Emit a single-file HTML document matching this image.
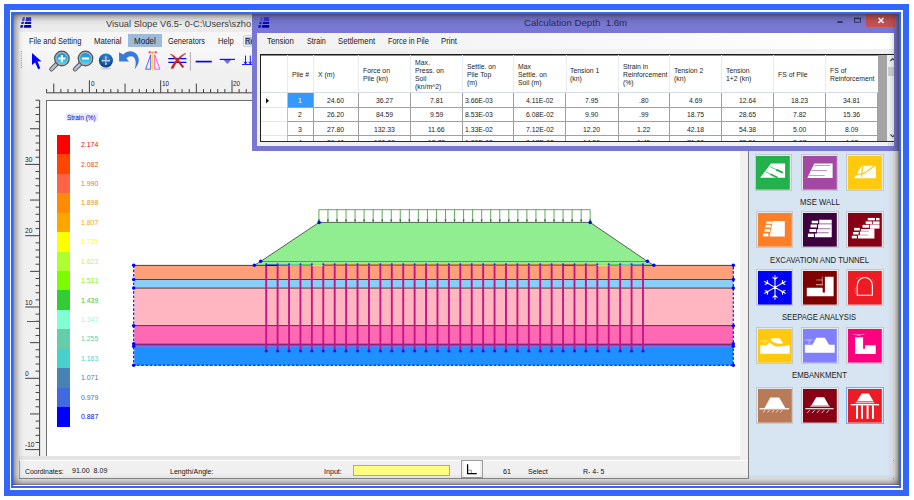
<!DOCTYPE html><html><head><meta charset="utf-8"><title>Visual Slope V6.5</title><style>
*{box-sizing:border-box;margin:0;padding:0}
html,body{width:914px;height:500px;background:#fff;overflow:hidden}
body{font-family:"Liberation Sans",sans-serif;color:#222}
#root{position:absolute;left:0;top:0;width:914px;height:500px;overflow:hidden;background:#fff}
.a{position:absolute}
.t{position:absolute;white-space:nowrap;line-height:1}
svg{overflow:visible}
svg text{font-family:"Liberation Sans",sans-serif}
</style></head><body><div id="root">
<div class="a" style="left:4px;top:4px;width:905px;height:492px;background:#3366ff"></div>
<div class="a" style="left:10px;top:10px;width:893px;height:480px;background:#fff"></div>
<div class="a" style="left:11px;top:12px;width:890px;height:476px;background:#3366ff"></div>
<div class="a" style="left:13px;top:14px;width:886px;height:472px;background:#fffdf4"></div>
<div id="scr" class="a" style="left:13px;top:14px;width:886px;height:471px;background:#ebebeb;overflow:hidden">
<div class="a" style="left:0.00px;top:0.00px;width:886.00px;height:18.00px;background:#ebebeb"></div>
<div class="t" style="left:92.60px;top:5px;font-size:9.8px;color:#3c3c3c;transform-origin:0 50%;transform:scaleX(0.9464);">Visual Slope V6.5- 0-C:\Users\szho</div>
<svg class="a" style="left:7.00px;top:3.30px" width="11.2" height="10.8" viewBox="0 0 11.2 10.8" >
<polygon points="2.7,0.2 5.1,0.2 4.2,4.3 1.8,4.3" fill="#5454e6"/><polygon points="6.2,0.2 11.2,0.2 11.2,4.3 5.3,4.3" fill="#3434d6"/><polygon points="1.55,5.1 4,5.1 3.55,7.1 1.1,7.1" fill="#2424d0"/><polygon points="5.1,5.1 11.2,5.1 11.2,7.1 4.65,7.1" fill="#0a0ac4"/><polygon points="0.75,8 3.3,8 2.7,10.7 0.1,10.7" fill="#1414c8"/><polygon points="4.4,8 11.2,8 11.2,10.7 3.8,10.7" fill="#0000b2"/>
</svg>
<div class="a" style="left:6.00px;top:18.00px;width:876.00px;height:16.00px;background:#f6f6f6"></div>
<div class="a" style="left:114.80px;top:20.40px;width:34.00px;height:12.50px;background:#9ebad9"></div>
<div class="t" style="left:15.80px;top:24px;font-size:8.2px;color:#1a1a1a;transform-origin:0 50%;transform:scaleX(0.9214);">File and Setting</div>
<div class="t" style="left:80.70px;top:24px;font-size:8.2px;color:#1a1a1a;transform-origin:0 50%;transform:scaleX(0.9463);">Material</div>
<div class="t" style="left:120.70px;top:24px;font-size:8.2px;color:#1a1a1a;transform-origin:0 50%;transform:scaleX(0.9806);">Model</div>
<div class="t" style="left:155.00px;top:24px;font-size:8.2px;color:#1a1a1a;transform-origin:0 50%;transform:scaleX(0.9020);">Generators</div>
<div class="t" style="left:204.50px;top:24px;font-size:8.2px;color:#1a1a1a;transform-origin:0 50%;transform:scaleX(0.9309);">Help</div>
<div class="a" style="left:229.50px;top:20.60px;width:20.00px;height:12.40px;background:#f1f1f1;border:1px solid #d0d0d0;border-radius:2px"></div>
<div class="a" style="left:231.80px;top:22.80px;width:12.00px;height:8.40px;background:#9ebad9"></div>
<div class="t" style="left:232.00px;top:24px;font-size:8.2px;color:#14143c;transform-origin:0 50%;transform:scaleX(0.9200);">Re</div>
<div class="a" style="left:6.00px;top:34.00px;width:876.00px;height:430.00px;background:#f0f0f0"></div>
<div class="a" style="left:6.00px;top:34.00px;width:876.00px;height:24.00px;background:linear-gradient(#f8f8f8,#f0f0f0)"></div>
<div class="a" style="left:33.00px;top:86.00px;width:694.50px;height:355.50px;background:#fff;border-left:1px solid #707070;border-top:1px solid #707070"></div>
<div class="a" style="left:6.00px;top:441.50px;width:729.50px;height:4.50px;background:#e4e4e4"></div>
<div class="a" style="left:6.00px;top:446.00px;width:729.50px;height:18.70px;background:#f0f0f0;border-top:1px solid #fff;border-left:1px solid #a8a8a8;border-bottom:1px solid #8c8c8c"></div>
<div class="t" style="left:12.00px;top:454px;font-size:8.0px;color:#111;transform-origin:0 50%;transform:scaleX(0.8532);">Coordinates:</div>
<div class="t" style="left:59.40px;top:453px;font-size:8.0px;color:#111;transform-origin:0 50%;transform:scaleX(0.8817);">91.00&nbsp; 8.09</div>
<div class="t" style="left:156.50px;top:454px;font-size:8.0px;color:#111;transform-origin:0 50%;transform:scaleX(0.8810);">Length/Angle:</div>
<div class="t" style="left:310.60px;top:454px;font-size:8.0px;color:#111;transform-origin:0 50%;transform:scaleX(0.8893);">Input:</div>
<div class="t" style="left:489.60px;top:454px;font-size:8.0px;color:#111;transform-origin:0 50%;transform:scaleX(0.8990);">61</div>
<div class="t" style="left:514.50px;top:454px;font-size:8.0px;color:#111;transform-origin:0 50%;transform:scaleX(0.8860);">Select</div>
<div class="t" style="left:569.60px;top:454px;font-size:8.0px;color:#111;transform-origin:0 50%;transform:scaleX(0.8753);">R- 4- 5</div>
<div class="a" style="left:340.40px;top:450.70px;width:96.30px;height:11.60px;background:#ffff80;border:1px solid #a8a8a0"></div>
<div class="a" style="left:447.60px;top:446.40px;width:22.30px;height:18.10px;background:#f0f0f0;border:1px solid #9c9c9c"></div>
<div class="a" style="left:450.80px;top:447.40px;width:16.30px;height:16.10px;background:#fff"></div>
<svg class="a" style="left:0.00px;top:0.00px" width="886" height="471" viewBox="0 0 886 471" >
<path d="M454.60,450.20 V459.50 H463.80" stroke="#000" stroke-width="1.25" fill="none"/>
<path d="M455.20,456.10 H458.30 V459.00" stroke="#555" stroke-width="0.6" fill="none"/>
</svg>
<svg class="a" style="left:0.00px;top:0.00px" width="886" height="471" viewBox="0 0 886 471" shape-rendering="auto">
<path d="M33.30,78.80 H239 M33.62,78.80 v-3.8 M40.75,78.80 v-9.2 M47.88,78.80 v-3.8 M55.01,78.80 v-3.8 M62.14,78.80 v-3.8 M69.27,78.80 v-3.8 M76.40,78.80 v-12.5 M83.53,78.80 v-3.8 M90.66,78.80 v-3.8 M97.79,78.80 v-3.8 M104.92,78.80 v-3.8 M112.05,78.80 v-9.2 M119.18,78.80 v-3.8 M126.31,78.80 v-3.8 M133.44,78.80 v-3.8 M140.57,78.80 v-3.8 M147.70,78.80 v-12.5 M154.83,78.80 v-3.8 M161.96,78.80 v-3.8 M169.09,78.80 v-3.8 M176.22,78.80 v-3.8 M183.35,78.80 v-9.2 M190.48,78.80 v-3.8 M197.61,78.80 v-3.8 M204.74,78.80 v-3.8 M211.87,78.80 v-3.8 M219.00,78.80 v-12.5 M226.13,78.80 v-3.8 M233.26,78.80 v-3.8" stroke="#404040" stroke-width="1" fill="none"/>
<path d="M26.60,86.30 V442 M26.60,86.23 h-4 M26.60,93.36 h-4 M26.60,100.49 h-4 M26.60,107.62 h-4 M26.60,114.75 h-9.6 M26.60,121.88 h-4 M26.60,129.01 h-4 M26.60,136.14 h-4 M26.60,143.27 h-4 M26.60,150.40 h-14.4 M26.60,157.53 h-4 M26.60,164.66 h-4 M26.60,171.79 h-4 M26.60,178.92 h-4 M26.60,186.05 h-9.6 M26.60,193.18 h-4 M26.60,200.31 h-4 M26.60,207.44 h-4 M26.60,214.57 h-4 M26.60,221.70 h-14.4 M26.60,228.83 h-4 M26.60,235.96 h-4 M26.60,243.09 h-4 M26.60,250.22 h-4 M26.60,257.35 h-9.6 M26.60,264.48 h-4 M26.60,271.61 h-4 M26.60,278.74 h-4 M26.60,285.87 h-4 M26.60,293.00 h-14.4 M26.60,300.13 h-4 M26.60,307.26 h-4 M26.60,314.39 h-4 M26.60,321.52 h-4 M26.60,328.65 h-9.6 M26.60,335.78 h-4 M26.60,342.91 h-4 M26.60,350.04 h-4 M26.60,357.17 h-4 M26.60,364.30 h-14.4 M26.60,371.43 h-4 M26.60,378.56 h-4 M26.60,385.69 h-4 M26.60,392.82 h-4 M26.60,399.95 h-9.6 M26.60,407.08 h-4 M26.60,414.21 h-4 M26.60,421.34 h-4 M26.60,428.47 h-4 M26.60,435.60 h-14.4" stroke="#404040" stroke-width="1" fill="none"/>
</svg>
<div class="t" style="left:77.60px;top:66px;font-size:7.3px;color:#222;transform-origin:0 50%;transform:scaleX(0.8800);">0</div>
<div class="t" style="left:148.90px;top:66px;font-size:7.3px;color:#222;transform-origin:0 50%;transform:scaleX(0.8800);">10</div>
<div class="t" style="left:220.20px;top:66px;font-size:7.3px;color:#222;transform-origin:0 50%;transform:scaleX(0.8800);">20</div>
<div class="t" style="left:12.20px;top:142px;font-size:7.3px;color:#222;transform-origin:0 50%;transform:scaleX(0.9000);">30</div>
<div class="t" style="left:12.20px;top:213px;font-size:7.3px;color:#222;transform-origin:0 50%;transform:scaleX(0.9000);">20</div>
<div class="t" style="left:12.20px;top:285px;font-size:7.3px;color:#222;transform-origin:0 50%;transform:scaleX(0.9000);">10</div>
<div class="t" style="left:12.20px;top:356px;font-size:7.3px;color:#222;transform-origin:0 50%;transform:scaleX(0.9000);">0</div>
<div class="t" style="left:12.20px;top:427px;font-size:7.3px;color:#222;transform-origin:0 50%;transform:scaleX(0.9000);">-10</div>
<div class="a" style="left:13.50px;top:307.00px;width:13.00px;height:1.00px;background:#e02020"></div>
<div class="a" style="left:52.50px;top:99.00px;width:32.30px;height:8.20px;background:#ebebf5"></div>
<div class="t" style="left:54.20px;top:100px;font-size:7.4px;color:#0000e0;transform-origin:0 50%;transform:scaleX(0.8755);">Strain (%)</div>
<div class="a" style="left:44.00px;top:121.00px;width:13.20px;height:19.73px;background:#ff0000"></div>
<div class="t" style="left:68.00px;top:127px;font-size:7.4px;color:#ff0000;transform-origin:0 50%;transform:scaleX(0.9342);">2.174</div>
<div class="a" style="left:44.00px;top:140.43px;width:13.20px;height:19.73px;background:#ff4500"></div>
<div class="t" style="left:68.00px;top:147px;font-size:7.4px;color:#ff4500;transform-origin:0 50%;transform:scaleX(0.9342);">2.082</div>
<div class="a" style="left:44.00px;top:159.86px;width:13.20px;height:19.73px;background:#ff6347"></div>
<div class="t" style="left:68.00px;top:166px;font-size:7.4px;color:#ff6347;transform-origin:0 50%;transform:scaleX(0.9342);">1.990</div>
<div class="a" style="left:44.00px;top:179.29px;width:13.20px;height:19.73px;background:#ff8c00"></div>
<div class="t" style="left:68.00px;top:185px;font-size:7.4px;color:#ff8c00;transform-origin:0 50%;transform:scaleX(0.9342);">1.898</div>
<div class="a" style="left:44.00px;top:198.72px;width:13.20px;height:19.73px;background:#ffa500"></div>
<div class="t" style="left:68.00px;top:205px;font-size:7.4px;color:#ffa500;transform-origin:0 50%;transform:scaleX(0.9342);">1.807</div>
<div class="a" style="left:44.00px;top:218.15px;width:13.20px;height:19.73px;background:#ffff00"></div>
<div class="t" style="left:68.00px;top:224px;font-size:7.4px;color:#ffff00;transform-origin:0 50%;transform:scaleX(0.9342);">1.715</div>
<div class="a" style="left:44.00px;top:237.58px;width:13.20px;height:19.73px;background:#adff2f"></div>
<div class="t" style="left:68.00px;top:244px;font-size:7.4px;color:#adff2f;transform-origin:0 50%;transform:scaleX(0.9342);">1.623</div>
<div class="a" style="left:44.00px;top:257.01px;width:13.20px;height:19.73px;background:#7cfc00"></div>
<div class="t" style="left:68.00px;top:263px;font-size:7.4px;color:#7cfc00;transform-origin:0 50%;transform:scaleX(0.9342);">1.531</div>
<div class="a" style="left:44.00px;top:276.44px;width:13.20px;height:19.73px;background:#32cd32"></div>
<div class="t" style="left:68.00px;top:283px;font-size:7.4px;color:#32cd32;transform-origin:0 50%;transform:scaleX(0.9342);">1.439</div>
<div class="a" style="left:44.00px;top:295.87px;width:13.20px;height:19.73px;background:#7fffd4"></div>
<div class="t" style="left:68.00px;top:302px;font-size:7.4px;color:#7fffd4;transform-origin:0 50%;transform:scaleX(0.9342);">1.347</div>
<div class="a" style="left:44.00px;top:315.30px;width:13.20px;height:19.73px;background:#66cdaa"></div>
<div class="t" style="left:68.00px;top:321px;font-size:7.4px;color:#66cdaa;transform-origin:0 50%;transform:scaleX(0.9342);">1.255</div>
<div class="a" style="left:44.00px;top:334.73px;width:13.20px;height:19.73px;background:#48d1cc"></div>
<div class="t" style="left:68.00px;top:341px;font-size:7.4px;color:#48d1cc;transform-origin:0 50%;transform:scaleX(0.9342);">1.163</div>
<div class="a" style="left:44.00px;top:354.16px;width:13.20px;height:19.73px;background:#4682b4"></div>
<div class="t" style="left:68.00px;top:360px;font-size:7.4px;color:#4682b4;transform-origin:0 50%;transform:scaleX(0.9342);">1.071</div>
<div class="a" style="left:44.00px;top:373.59px;width:13.20px;height:19.73px;background:#4169e1"></div>
<div class="t" style="left:68.00px;top:380px;font-size:7.4px;color:#4169e1;transform-origin:0 50%;transform:scaleX(0.9342);">0.979</div>
<div class="a" style="left:44.00px;top:393.02px;width:13.20px;height:19.73px;background:#0000ff"></div>
<div class="t" style="left:68.00px;top:399px;font-size:7.4px;color:#0000ff;transform-origin:0 50%;transform:scaleX(0.9342);">0.887</div>
<svg class="a" style="left:0.00px;top:0.00px" width="886" height="471" viewBox="0 0 886 471" >
<rect x="121.30" y="251.40" width="598.70" height="14.40" fill="#ffa07a"/>
<rect x="121.30" y="265.50" width="598.70" height="8.90" fill="#87cefa"/>
<rect x="121.30" y="274.10" width="598.70" height="37.80" fill="#ffb6c1"/>
<rect x="121.30" y="311.60" width="598.70" height="18.90" fill="#ff69b4"/>
<rect x="121.30" y="330.20" width="598.70" height="2.50" fill="#ff00ff"/>
<rect x="121.30" y="332.40" width="598.70" height="19.10" fill="#1e90ff"/>
<path d="M121.30,251.40 H720.00" stroke="#3a3030" stroke-width="0.9"/>
<path d="M121.30,265.50 H720.00" stroke="#3a3030" stroke-width="0.9"/>
<path d="M121.30,274.10 H720.00" stroke="#3a3030" stroke-width="0.9"/>
<path d="M121.30,311.60 H720.00" stroke="#3a3030" stroke-width="0.9"/>
<path d="M121.30,330.20 H720.00" stroke="#3a3030" stroke-width="0.9"/>
<polygon points="241.30,251.30 247.70,247.40 306.10,208.40 577.20,208.40 634.40,247.40 640.90,251.30" fill="#90ee90" stroke="#3a3a3a" stroke-width="0.8"/>
<path d="M247.70,247.50 H634.40" stroke="#e8640c" stroke-width="1"/>
<path d="M305.90,208.40 V195.70 H577.20 V208.40 M314.94,195.70 V208.00 M323.99,195.70 V208.00 M333.03,195.70 V208.00 M342.07,195.70 V208.00 M351.12,195.70 V208.00 M360.16,195.70 V208.00 M369.20,195.70 V208.00 M378.25,195.70 V208.00 M387.29,195.70 V208.00 M396.33,195.70 V208.00 M405.38,195.70 V208.00 M414.42,195.70 V208.00 M423.46,195.70 V208.00 M432.51,195.70 V208.00 M441.55,195.70 V208.00 M450.59,195.70 V208.00 M459.64,195.70 V208.00 M468.68,195.70 V208.00 M477.72,195.70 V208.00 M486.77,195.70 V208.00 M495.81,195.70 V208.00 M504.85,195.70 V208.00 M513.90,195.70 V208.00 M522.94,195.70 V208.00 M531.98,195.70 V208.00 M541.03,195.70 V208.00 M550.07,195.70 V208.00 M559.11,195.70 V208.00 M568.16,195.70 V208.00" stroke="#2e8b2e" stroke-width="0.75" fill="none"/>
<path d="M304.80,205.60 L305.90,208.20 L307.00,205.60Z M313.84,205.60 L314.94,208.20 L316.04,205.60Z M322.89,205.60 L323.99,208.20 L325.09,205.60Z M331.93,205.60 L333.03,208.20 L334.13,205.60Z M340.97,205.60 L342.07,208.20 L343.17,205.60Z M350.02,205.60 L351.12,208.20 L352.22,205.60Z M359.06,205.60 L360.16,208.20 L361.26,205.60Z M368.10,205.60 L369.20,208.20 L370.30,205.60Z M377.15,205.60 L378.25,208.20 L379.35,205.60Z M386.19,205.60 L387.29,208.20 L388.39,205.60Z M395.23,205.60 L396.33,208.20 L397.43,205.60Z M404.28,205.60 L405.38,208.20 L406.48,205.60Z M413.32,205.60 L414.42,208.20 L415.52,205.60Z M422.36,205.60 L423.46,208.20 L424.56,205.60Z M431.41,205.60 L432.51,208.20 L433.61,205.60Z M440.45,205.60 L441.55,208.20 L442.65,205.60Z M449.49,205.60 L450.59,208.20 L451.69,205.60Z M458.54,205.60 L459.64,208.20 L460.74,205.60Z M467.58,205.60 L468.68,208.20 L469.78,205.60Z M476.62,205.60 L477.72,208.20 L478.82,205.60Z M485.67,205.60 L486.77,208.20 L487.87,205.60Z M494.71,205.60 L495.81,208.20 L496.91,205.60Z M503.75,205.60 L504.85,208.20 L505.95,205.60Z M512.80,205.60 L513.90,208.20 L515.00,205.60Z M521.84,205.60 L522.94,208.20 L524.04,205.60Z M530.88,205.60 L531.98,208.20 L533.08,205.60Z M539.93,205.60 L541.03,208.20 L542.13,205.60Z M548.97,205.60 L550.07,208.20 L551.17,205.60Z M558.01,205.60 L559.11,208.20 L560.21,205.60Z M567.06,205.60 L568.16,208.20 L569.26,205.60Z M576.10,205.60 L577.20,208.20 L578.30,205.60Z" fill="#1e7a1e"/>
<path d="M253.20,251.40 V337.00 M264.62,251.40 V337.00 M276.04,251.40 V337.00 M287.45,251.40 V337.00 M298.87,251.40 V337.00 M310.29,251.40 V337.00 M321.71,251.40 V337.00 M333.13,251.40 V337.00 M344.54,251.40 V337.00 M355.96,251.40 V337.00 M367.38,251.40 V337.00 M378.80,251.40 V337.00 M390.22,251.40 V337.00 M401.63,251.40 V337.00 M413.05,251.40 V337.00 M424.47,251.40 V337.00 M435.89,251.40 V337.00 M447.31,251.40 V337.00 M458.72,251.40 V337.00 M470.14,251.40 V337.00 M481.56,251.40 V337.00 M492.98,251.40 V337.00 M504.40,251.40 V337.00 M515.81,251.40 V337.00 M527.23,251.40 V337.00 M538.65,251.40 V337.00 M550.07,251.40 V337.00 M561.49,251.40 V337.00 M572.90,251.40 V337.00 M584.32,251.40 V337.00 M595.74,251.40 V337.00 M607.16,251.40 V337.00 M618.58,251.40 V337.00 M629.99,251.40 V337.00" stroke="#c71585" stroke-width="1.9" fill="none"/>
<path d="M253.20,251.30 H264.62" stroke="#0000ff" stroke-width="1.5"/>
<path d="M264.62,251.30 H276.04" stroke="#4169e1" stroke-width="1.5"/>
<path d="M276.04,251.30 H287.45" stroke="#48d1cc" stroke-width="1.5"/>
<path d="M287.45,251.30 H298.87" stroke="#32cd32" stroke-width="1.5"/>
<path d="M298.87,251.30 H310.29" stroke="#adff2f" stroke-width="1.5"/>
<path d="M310.29,251.30 H550.07" stroke="#ff4500" stroke-width="1.5"/>
<path d="M550.07,251.30 H561.49" stroke="#ff0000" stroke-width="1.5"/>
<path d="M561.49,251.30 H584.32" stroke="#ff4500" stroke-width="1.5"/>
<path d="M584.32,251.30 H595.74" stroke="#adff2f" stroke-width="1.5"/>
<path d="M595.74,251.30 H607.16" stroke="#32cd32" stroke-width="1.5"/>
<path d="M607.16,251.30 H618.58" stroke="#48d1cc" stroke-width="1.5"/>
<path d="M618.58,251.30 H629.99" stroke="#4169e1" stroke-width="1.5"/>
<circle cx="253.20" cy="337.00" r="1.6" fill="#1a1aff"/>
<circle cx="253.20" cy="250.30" r="1.1" fill="#2a2ae8"/>
<circle cx="264.62" cy="337.00" r="1.6" fill="#1a1aff"/>
<circle cx="264.62" cy="250.30" r="1.1" fill="#2a2ae8"/>
<circle cx="276.04" cy="337.00" r="1.6" fill="#1a1aff"/>
<circle cx="276.04" cy="250.30" r="1.1" fill="#2a2ae8"/>
<circle cx="287.45" cy="337.00" r="1.6" fill="#1a1aff"/>
<circle cx="287.45" cy="250.30" r="1.1" fill="#2a2ae8"/>
<circle cx="298.87" cy="337.00" r="1.6" fill="#1a1aff"/>
<circle cx="298.87" cy="250.30" r="1.1" fill="#2a2ae8"/>
<circle cx="310.29" cy="337.00" r="1.6" fill="#1a1aff"/>
<circle cx="310.29" cy="250.30" r="1.1" fill="#2a2ae8"/>
<circle cx="321.71" cy="337.00" r="1.6" fill="#1a1aff"/>
<circle cx="321.71" cy="250.30" r="1.1" fill="#2a2ae8"/>
<circle cx="333.13" cy="337.00" r="1.6" fill="#1a1aff"/>
<circle cx="333.13" cy="250.30" r="1.1" fill="#2a2ae8"/>
<circle cx="344.54" cy="337.00" r="1.6" fill="#1a1aff"/>
<circle cx="344.54" cy="250.30" r="1.1" fill="#2a2ae8"/>
<circle cx="355.96" cy="337.00" r="1.6" fill="#1a1aff"/>
<circle cx="355.96" cy="250.30" r="1.1" fill="#2a2ae8"/>
<circle cx="367.38" cy="337.00" r="1.6" fill="#1a1aff"/>
<circle cx="367.38" cy="250.30" r="1.1" fill="#2a2ae8"/>
<circle cx="378.80" cy="337.00" r="1.6" fill="#1a1aff"/>
<circle cx="378.80" cy="250.30" r="1.1" fill="#2a2ae8"/>
<circle cx="390.22" cy="337.00" r="1.6" fill="#1a1aff"/>
<circle cx="390.22" cy="250.30" r="1.1" fill="#2a2ae8"/>
<circle cx="401.63" cy="337.00" r="1.6" fill="#1a1aff"/>
<circle cx="401.63" cy="250.30" r="1.1" fill="#2a2ae8"/>
<circle cx="413.05" cy="337.00" r="1.6" fill="#1a1aff"/>
<circle cx="413.05" cy="250.30" r="1.1" fill="#2a2ae8"/>
<circle cx="424.47" cy="337.00" r="1.6" fill="#1a1aff"/>
<circle cx="424.47" cy="250.30" r="1.1" fill="#2a2ae8"/>
<circle cx="435.89" cy="337.00" r="1.6" fill="#1a1aff"/>
<circle cx="435.89" cy="250.30" r="1.1" fill="#2a2ae8"/>
<circle cx="447.31" cy="337.00" r="1.6" fill="#1a1aff"/>
<circle cx="447.31" cy="250.30" r="1.1" fill="#2a2ae8"/>
<circle cx="458.72" cy="337.00" r="1.6" fill="#1a1aff"/>
<circle cx="458.72" cy="250.30" r="1.1" fill="#2a2ae8"/>
<circle cx="470.14" cy="337.00" r="1.6" fill="#1a1aff"/>
<circle cx="470.14" cy="250.30" r="1.1" fill="#2a2ae8"/>
<circle cx="481.56" cy="337.00" r="1.6" fill="#1a1aff"/>
<circle cx="481.56" cy="250.30" r="1.1" fill="#2a2ae8"/>
<circle cx="492.98" cy="337.00" r="1.6" fill="#1a1aff"/>
<circle cx="492.98" cy="250.30" r="1.1" fill="#2a2ae8"/>
<circle cx="504.40" cy="337.00" r="1.6" fill="#1a1aff"/>
<circle cx="504.40" cy="250.30" r="1.1" fill="#2a2ae8"/>
<circle cx="515.81" cy="337.00" r="1.6" fill="#1a1aff"/>
<circle cx="515.81" cy="250.30" r="1.1" fill="#2a2ae8"/>
<circle cx="527.23" cy="337.00" r="1.6" fill="#1a1aff"/>
<circle cx="527.23" cy="250.30" r="1.1" fill="#2a2ae8"/>
<circle cx="538.65" cy="337.00" r="1.6" fill="#1a1aff"/>
<circle cx="538.65" cy="250.30" r="1.1" fill="#2a2ae8"/>
<circle cx="550.07" cy="337.00" r="1.6" fill="#1a1aff"/>
<circle cx="550.07" cy="250.30" r="1.1" fill="#2a2ae8"/>
<circle cx="561.49" cy="337.00" r="1.6" fill="#1a1aff"/>
<circle cx="561.49" cy="250.30" r="1.1" fill="#2a2ae8"/>
<circle cx="572.90" cy="337.00" r="1.6" fill="#1a1aff"/>
<circle cx="572.90" cy="250.30" r="1.1" fill="#2a2ae8"/>
<circle cx="584.32" cy="337.00" r="1.6" fill="#1a1aff"/>
<circle cx="584.32" cy="250.30" r="1.1" fill="#2a2ae8"/>
<circle cx="595.74" cy="337.00" r="1.6" fill="#1a1aff"/>
<circle cx="595.74" cy="250.30" r="1.1" fill="#2a2ae8"/>
<circle cx="607.16" cy="337.00" r="1.6" fill="#1a1aff"/>
<circle cx="607.16" cy="250.30" r="1.1" fill="#2a2ae8"/>
<circle cx="618.58" cy="337.00" r="1.6" fill="#1a1aff"/>
<circle cx="618.58" cy="250.30" r="1.1" fill="#2a2ae8"/>
<circle cx="629.99" cy="337.00" r="1.6" fill="#1a1aff"/>
<circle cx="629.99" cy="250.30" r="1.1" fill="#2a2ae8"/>
<path d="M120.70,251.30 V351.30 H720.30 V251.30" stroke="#0000ff" stroke-width="1.1" stroke-dasharray="2.6,1.7" fill="none"/>
<circle cx="120.70" cy="251.30" r="1.75" fill="#0000ff"/>
<circle cx="120.70" cy="265.50" r="1.75" fill="#0000ff"/>
<circle cx="120.70" cy="274.10" r="1.75" fill="#0000ff"/>
<circle cx="120.70" cy="311.70" r="1.75" fill="#0000ff"/>
<circle cx="120.70" cy="329.70" r="1.75" fill="#0000ff"/>
<circle cx="120.70" cy="332.30" r="1.75" fill="#0000ff"/>
<circle cx="120.70" cy="351.30" r="1.75" fill="#0000ff"/>
<circle cx="720.30" cy="251.30" r="1.75" fill="#0000ff"/>
<circle cx="720.30" cy="265.50" r="1.75" fill="#0000ff"/>
<circle cx="720.30" cy="274.10" r="1.75" fill="#0000ff"/>
<circle cx="720.30" cy="311.70" r="1.75" fill="#0000ff"/>
<circle cx="720.30" cy="329.70" r="1.75" fill="#0000ff"/>
<circle cx="720.30" cy="332.30" r="1.75" fill="#0000ff"/>
<circle cx="720.30" cy="351.30" r="1.75" fill="#0000ff"/>
<circle cx="241.30" cy="251.20" r="1.75" fill="#0000ff"/>
<circle cx="247.70" cy="247.30" r="1.75" fill="#0000ff"/>
<circle cx="306.10" cy="208.40" r="1.75" fill="#0000ff"/>
<circle cx="577.20" cy="208.40" r="1.75" fill="#0000ff"/>
<circle cx="634.40" cy="247.30" r="1.75" fill="#0000ff"/>
<circle cx="640.90" cy="251.20" r="1.75" fill="#0000ff"/>
</svg>
<div class="a" style="left:727.40px;top:86.00px;width:8.30px;height:360.00px;background:#f0f0f0"></div>
<div class="a" style="left:735.00px;top:86.00px;width:142.50px;height:378.20px;background:#d7e4f2"></div>
<div class="a" style="left:735.00px;top:86.00px;width:1.00px;height:377.80px;background:#7c7c7c"></div>
<div class="a" style="left:877.50px;top:86.00px;width:3.60px;height:378.00px;background:#e9e9e9"></div>
<div class="a" style="left:879.60px;top:445.60px;width:1.80px;height:1.00px;background:#a6a6a6"></div>
<div class="a" style="left:879.60px;top:464.00px;width:1.80px;height:1.00px;background:#a6a6a6"></div>
<div class="a" style="left:741.50px;top:139.85px;width:37.30px;height:37.00px;background:#e6e8ea;border:1px solid #c6c9cc"></div>
<svg class="a" style="left:743.20px;top:141.60px" width="33.8" height="33.6" viewBox="0 0 34 34" preserveAspectRatio="none">
<rect width="34" height="34" fill="#22b14c"/><polygon points="4.05,22.05 15.1,7.65 29.25,7.65 29.25,22.05" fill="#fff"/><path d="M14,10.8 L20.7,13.95 M9.45,15.9 L14.85,18.6" stroke="#22b14c" stroke-width="0.7"/><path d="M20.9,14.05 L26.3,16.55 M15.1,18.7 L20.9,21.5" stroke="#22b14c" stroke-width="1.9" stroke-linecap="round"/>
</svg>
<div class="a" style="left:787.80px;top:139.85px;width:37.30px;height:37.00px;background:#e6e8ea;border:1px solid #c6c9cc"></div>
<svg class="a" style="left:789.50px;top:141.60px" width="33.8" height="33.6" viewBox="0 0 34 34" preserveAspectRatio="none">
<rect width="34" height="34" fill="#a349a4"/><polygon points="4.33,22.26 11.4,7.6 29.8,7.6 29.8,22.26" fill="#fff"/><path d="M11.2,9.6 H27.1 M8.5,14.7 H24.1 M5.85,19.8 H21.8" stroke="#a349a4" stroke-opacity=".7" stroke-width="0.85"/>
</svg>
<div class="a" style="left:833.30px;top:139.85px;width:37.30px;height:37.00px;background:#e6e8ea;border:1px solid #c6c9cc"></div>
<svg class="a" style="left:835.00px;top:141.60px" width="33.8" height="33.6" viewBox="0 0 34 34" preserveAspectRatio="none">
<rect width="34" height="34" fill="#ffc90e"/><polygon points="6.1,22.6 13.7,9.9 28.1,9.9 28.1,22.6" fill="#fff"/><path d="M27.8,9.2 L16.2,17.7 L7.6,18.8 M14.5,10.4 L13.7,21" stroke="#ffc90e" stroke-width="1.3" fill="none"/>
</svg>
<div class="a" style="left:742.90px;top:197.30px;width:37.30px;height:37.00px;background:#e6e8ea;border:1px solid #c6c9cc"></div>
<svg class="a" style="left:744.60px;top:199.05px" width="33.8" height="33.6" viewBox="0 0 34 34" preserveAspectRatio="none">
<rect width="34" height="34" fill="#ff7f27"/><polygon points="14.9,8.1 27,8.1 27,23.85 11.6,23.85" fill="#fff"/><rect x="8.3" y="8.65" width="5.90" height="2.25" fill="#fff"/><rect x="7.4" y="12" width="5.70" height="2.70" fill="#fff"/><rect x="6.5" y="16.3" width="5.70" height="2.70" fill="#fff"/><rect x="5.15" y="20.8" width="5.35" height="2.90" fill="#fff"/><path d="M14.6,11.4 H8 M13.5,15.5 H7 M12.5,19.9 H6" stroke="#ff7f27" stroke-width="0.01"/>
</svg>
<div class="a" style="left:788.30px;top:197.30px;width:37.30px;height:37.00px;background:#e6e8ea;border:1px solid #c6c9cc"></div>
<svg class="a" style="left:790.00px;top:199.05px" width="33.8" height="33.6" viewBox="0 0 34 34" preserveAspectRatio="none">
<rect width="34" height="34" fill="#3f0040"/><polygon points="16.3,6.85 28.9,6.85 28.9,24.5 12,24.5 12,20.7 14,20.7 14,16.5 15.2,16.5 15.2,11.4 16.3,11.4" fill="#fff"/><rect x="8.74" y="7.85" width="6.46" height="2.55" fill="#fff"/><rect x="7.6" y="11.65" width="6.40" height="3.00" fill="#fff"/><rect x="6.46" y="16.2" width="6.74" height="3.00" fill="#fff"/><rect x="4.94" y="20.9" width="5.96" height="3.40" fill="#fff"/><path d="M15.2,11.0 H28.9 M14,15.95 H27.7 M13.3,20 H25.8" stroke="#3f0040" stroke-opacity=".75" stroke-width="0.75"/>
</svg>
<div class="a" style="left:833.40px;top:197.30px;width:37.30px;height:37.00px;background:#e6e8ea;border:1px solid #c6c9cc"></div>
<svg class="a" style="left:835.10px;top:199.05px" width="33.8" height="33.6" viewBox="0 0 34 34" preserveAspectRatio="none">
<rect width="34" height="34" fill="#880015"/><rect x="19.9" y="5" width="7.20" height="2.45" fill="#fff"/><rect x="28.2" y="5" width="3.50" height="2.45" fill="#fff"/><rect x="17.8" y="8.5" width="6.30" height="2.75" fill="#fff"/><rect x="24.9" y="8.5" width="6.80" height="2.75" fill="#fff"/><rect x="14.6" y="12" width="6.80" height="2.90" fill="#fff"/><rect x="22.2" y="11.6" width="9.50" height="4.20" fill="#fff"/><rect x="6.2" y="15.05" width="5.70" height="2.65" fill="#fff"/><rect x="5.1" y="19.2" width="5.70" height="2.50" fill="#fff"/><rect x="3.8" y="23" width="5.10" height="2.70" fill="#fff"/><polygon points="13,16.2 22.2,16.2 22.2,15.8 26.6,15.8 26.6,25.7 10,25.7 10,22.6 12,22.6 12,18.8 13,18.8" fill="#fff"/><path d="M13,18.45 H21 M12,22.3 H20" stroke="#880015" stroke-opacity=".55" stroke-width="0.7"/>
</svg>
<div class="a" style="left:742.90px;top:255.10px;width:37.30px;height:37.00px;background:#e6e8ea;border:1px solid #c6c9cc"></div>
<svg class="a" style="left:744.60px;top:256.85px" width="33.8" height="33.6" viewBox="0 0 34 34" preserveAspectRatio="none">
<rect width="34" height="34" fill="#0000ff"/><path d="M17.10,16.60 L17.10,4.20 M17.10,8.42 L19.63,6.14 M17.10,8.42 L14.57,6.14 M17.10,16.60 L6.36,10.40 M10.01,12.51 L9.31,9.18 M10.01,12.51 L6.78,13.56 M17.10,16.60 L6.36,22.80 M10.01,20.69 L6.78,19.64 M10.01,20.69 L9.31,24.02 M17.10,16.60 L17.10,29.00 M17.10,24.78 L14.57,27.06 M17.10,24.78 L19.63,27.06 M17.10,16.60 L27.84,22.80 M24.19,20.69 L24.89,24.02 M24.19,20.69 L27.42,19.64 M17.10,16.60 L27.84,10.40 M24.19,12.51 L27.42,13.56 M24.19,12.51 L24.89,9.18" stroke="#fff" stroke-width="1.05" fill="none"/>
</svg>
<div class="a" style="left:788.30px;top:255.10px;width:37.30px;height:37.00px;background:#e6e8ea;border:1px solid #c6c9cc"></div>
<svg class="a" style="left:790.00px;top:256.85px" width="33.8" height="33.6" viewBox="0 0 34 34" preserveAspectRatio="none">
<rect width="34" height="34" fill="#800000"/><polygon points="3.8,16.9 19.76,16.9 19.76,21.66 22.04,21.66 22.04,5.7 30.8,5.7 30.8,25.46 3.8,25.46" fill="#fff"/><path d="M13.3,9.1 H19.7 M19.4,5.7 V14.8" stroke="#fff" stroke-opacity=".85" stroke-width="0.6"/><path d="M12.9,13.85 H19.7" stroke="#e9bcbc" stroke-opacity=".8" stroke-width="1.2"/>
</svg>
<div class="a" style="left:833.40px;top:255.10px;width:37.30px;height:37.00px;background:#e6e8ea;border:1px solid #c6c9cc"></div>
<svg class="a" style="left:835.10px;top:256.85px" width="33.8" height="33.6" viewBox="0 0 34 34" preserveAspectRatio="none">
<rect width="34" height="34" fill="#ed1c24"/><path d="M9.3,24.5 V14.6 C9.3,4 24.5,4 24.5,14.6 V24.5 Z" stroke="#fff" stroke-width="1.1" fill="none" stroke-linejoin="round"/><path d="M8.2,7 L10,8 M10.5,5.2 L11.8,6.6 M24.4,8.4 L25.6,9.4 M25.6,10.6 L26.8,11.4 M6.4,17.2 L8,18 M6.6,20 L8,20.6 M7,22.4 L8.2,22.6" stroke="#fbb" stroke-opacity=".7" stroke-width="0.6"/>
</svg>
<div class="a" style="left:742.90px;top:313.20px;width:37.30px;height:37.00px;background:#e6e8ea;border:1px solid #c6c9cc"></div>
<svg class="a" style="left:744.60px;top:314.95px" width="33.8" height="33.6" viewBox="0 0 34 34" preserveAspectRatio="none">
<rect width="34" height="34" fill="#ffc90e"/><path d="M2.25,16.47 H8.6 L11.4,13.5 L15.3,16.47 C17.5,18 21,17.9 26.5,17.3 L31.8,16.47 V24.93 H2.25Z" fill="#fff"/><path d="M12.6,10.8 L13.8,9.45 H22.05 L25.3,14.5 C21,15.6 16,14.6 12.6,10.8Z" fill="#fff"/><path d="M2.25,12.2 H10.6 M5.6,13.4 H8 M6.4,14.6 H7.4" stroke="#fff" stroke-opacity=".6" stroke-width="0.7"/>
</svg>
<div class="a" style="left:788.30px;top:313.20px;width:37.30px;height:37.00px;background:#e6e8ea;border:1px solid #c6c9cc"></div>
<svg class="a" style="left:790.00px;top:314.95px" width="33.8" height="33.6" viewBox="0 0 34 34" preserveAspectRatio="none">
<rect width="34" height="34" fill="#8080ff"/><path d="M1.9,15.96 H9.5 L13.3,8.97 H22 L26.2,15.96 H31.9 V24.16 H1.9Z" fill="#fff"/><path d="M1.9,11 H10.6 M4.9,12.2 H8 M5.2,14.4 H7.6" stroke="#fff" stroke-opacity=".65" stroke-width="0.7"/>
</svg>
<div class="a" style="left:833.40px;top:313.20px;width:37.30px;height:37.00px;background:#e6e8ea;border:1px solid #c6c9cc"></div>
<svg class="a" style="left:835.10px;top:314.95px" width="33.8" height="33.6" viewBox="0 0 34 34" preserveAspectRatio="none">
<rect width="34" height="34" fill="#ff007f"/><polygon points="7.07,8.36 15.2,8.36 15.2,20.1 17.1,20.1 17.1,16.34 27.9,16.34 27.9,25.3 7.07,25.3" fill="#fff"/><path d="M5.3,5.55 H16.7 M9.1,6.6 H12.5" stroke="#fff" stroke-opacity=".7" stroke-width="0.6"/>
</svg>
<div class="a" style="left:742.90px;top:373.40px;width:37.30px;height:37.00px;background:#e6e8ea;border:1px solid #c6c9cc"></div>
<svg class="a" style="left:744.60px;top:375.15px" width="33.8" height="33.6" viewBox="0 0 34 34" preserveAspectRatio="none">
<rect width="34" height="34" fill="#b97a57"/><polygon points="6.5,19.6 12.35,8.48 21.35,8.48 27.65,19.6" fill="#fff"/><path d="M1.55,20 H31.25" stroke="#fff" stroke-width="1.3"/><path d="M6.95,21.4 L5.15,23.8 M11.45,21.4 L9.65,23.8 M15.95,21.4 L14.15,23.8 M20,21.4 L18.2,23.8 M24.3,21.4 L22.5,23.8" stroke="#fff" stroke-opacity=".9" stroke-width="0.8"/>
</svg>
<div class="a" style="left:788.30px;top:373.40px;width:37.30px;height:37.00px;background:#e6e8ea;border:1px solid #c6c9cc"></div>
<svg class="a" style="left:790.00px;top:375.15px" width="33.8" height="33.6" viewBox="0 0 34 34" preserveAspectRatio="none">
<rect width="34" height="34" fill="#880015"/><polygon points="8.2,16.87 13.3,8.36 21.3,8.36 26.2,16.87" fill="#fff"/><path d="M7.2,17.5 H27" stroke="#d9a9b1" stroke-width="1.2"/><path d="M2.3,19.95 H30.8" stroke="#fff" stroke-width="1.1"/><path d="M6.8,21.4 L4.2,24.3 M11.8,21.4 L9.2,24.3 M16.6,21.4 L14,24.3 M21.4,21.4 L18.8,24.3 M26.2,21.4 L23.6,24.3" stroke="#fff" stroke-opacity=".9" stroke-width="0.85"/>
</svg>
<div class="a" style="left:833.40px;top:373.40px;width:37.30px;height:37.00px;background:#dcecfb;border:1px solid #6fb0f2"></div>
<svg class="a" style="left:835.10px;top:375.15px" width="33.8" height="33.6" viewBox="0 0 34 34" preserveAspectRatio="none">
<rect width="34" height="34" fill="#ed1c24"/><polygon points="8.9,12.5 13.8,4.56 21,4.56 25.6,12.5" fill="#fff"/><path d="M7.75,13.75 H26.4" stroke="#f5b5b8" stroke-width="1.6"/><path d="M2.8,15.9 H31.3" stroke="#fff" stroke-width="1.4"/><path d="M9.1,16.6 V30 M14.1,16.6 V30 M19.7,16.6 V30 M25.1,16.6 V30" stroke="#fff" stroke-width="2"/>
</svg>
<div class="t" style="left:786.75px;top:185px;font-size:8.2px;color:#1c1c1c;transform-origin:0 50%;transform:scaleX(0.9483);">MSE WALL</div>
<div class="t" style="left:756.80px;top:243px;font-size:8.2px;color:#1c1c1c;transform-origin:0 50%;transform:scaleX(0.9438);">EXCAVATION AND TUNNEL</div>
<div class="t" style="left:769.30px;top:300px;font-size:8.2px;color:#1c1c1c;transform-origin:0 50%;transform:scaleX(0.9285);">SEEPAGE ANALYSIS</div>
<div class="t" style="left:779.15px;top:358px;font-size:8.2px;color:#1c1c1c;transform-origin:0 50%;transform:scaleX(0.9523);">EMBANKMENT</div>
<svg class="a" style="left:0.00px;top:0.00px" width="886" height="471" viewBox="0 0 886 471" >
<defs>
<linearGradient id="gl" x1="0" y1="0" x2="0" y2="1"><stop offset="0" stop-color="#1888d8"/><stop offset="0.55" stop-color="#22b4ea"/><stop offset="1" stop-color="#5ee8f4"/></linearGradient>
<radialGradient id="gs" cx="0.5" cy="0.3" r="0.75"><stop offset="0" stop-color="#3f8fd6"/><stop offset="0.55" stop-color="#165fae"/><stop offset="1" stop-color="#062f66"/></radialGradient>
<linearGradient id="gx" x1="0" y1="0" x2="1" y2="1"><stop offset="0" stop-color="#e83a30"/><stop offset="1" stop-color="#a80808"/></linearGradient>
</defs>
<path d="M8.30,37.00 V54.20" stroke="#9a9a9a" stroke-width="1.2" stroke-dasharray="1,1.3"/>
<polygon points="19.00,39.00 19.00,51.00 22.20,48.40 25.10,55.20 27.30,54.20 24.60,47.60 28.40,47.30" fill="#0000ff"/>
<path d="M43.50,50.10 L38.40,55.30" stroke="#50565c" stroke-width="4.4" stroke-linecap="round"/>
<path d="M43.50,50.10 L38.40,55.30" stroke="#b9c1c9" stroke-width="2.5" stroke-linecap="round"/>
<circle cx="48.90" cy="44.50" r="7.1" fill="url(#gl)" stroke="#50565c" stroke-width="1.6"/>
<circle cx="48.90" cy="44.50" r="6.0" fill="none" stroke="#a4aeb8" stroke-width="1.3"/>
<path d="M45.40,44.50 H52.40 M48.90,41.00 V48.00" stroke="#fff" stroke-width="2.1"/>
<path d="M67.10,50.10 L62.00,55.30" stroke="#50565c" stroke-width="4.4" stroke-linecap="round"/>
<path d="M67.10,50.10 L62.00,55.30" stroke="#b9c1c9" stroke-width="2.5" stroke-linecap="round"/>
<circle cx="72.50" cy="44.50" r="7.1" fill="url(#gl)" stroke="#50565c" stroke-width="1.6"/>
<circle cx="72.50" cy="44.50" r="6.0" fill="none" stroke="#a4aeb8" stroke-width="1.3"/>
<path d="M69.00,44.50 H76.00" stroke="#fff" stroke-width="2.1"/>
<ellipse cx="93.00" cy="54.40" rx="5.2" ry="1.1" fill="#c4ccd6"/>
<circle cx="92.90" cy="46.50" r="7.05" fill="url(#gs)"/>
<path d="M89.40,46.60 H96.40 M92.90,43.00 V50.20" stroke="#c4d2e8" stroke-width="1.1"/>
<path d="M88.40,46.60 l1.5,-1.3 v2.6z M97.40,46.60 l-1.5,-1.3 v2.6z M92.90,42.00 l-1.3,1.5 h2.6z M92.90,51.20 l-1.3,-1.5 h2.6z" fill="#c4d2e8"/>
<path d="M106.00,38.20 L106.15,47.40 L116.00,47.40 L113.50,44.50 C116.00,41.40 120.20,41.40 121.80,44.70 C123.40,48.00 122.80,52.00 121.40,55.50 C124.60,52.00 126.40,48.40 125.70,44.60 C124.40,37.40 116.00,34.40 110.30,40.60 Z" fill="#3b79d8"/>
<path d="M139.70,37.40 V56.70" stroke="#f2e020" stroke-width="1.2"/>
<polygon points="132.60,55.20 137.70,55.20 137.70,40.80" fill="none" stroke="#3a3aff" stroke-width="0.8"/>
<polygon points="141.70,40.80 141.70,55.20 146.90,55.20" fill="none" stroke="#ff30e0" stroke-width="0.8"/>
<path d="M135.80,38.30 H143.80 M135.60,38.30 l1.6,-1 v2z M144.00,38.30 l-1.6,-1 v2z" stroke="#f23a3a" stroke-width="0.5" fill="#f23a3a"/>
<path d="M155.30,44.60 H173.40 M155.30,48.40 H173.40" stroke="#0000ff" stroke-width="1.3"/>
<path d="M157.40,40.00 C162.00,41.20 167.00,47.50 170.90,53.00 L169.40,53.60 C165.50,48.50 161.00,43.60 157.40,40.00Z" fill="url(#gx)" stroke="#c8261c" stroke-width="0.5"/>
<path d="M172.60,39.40 C166.00,42.00 161.00,48.00 158.00,54.30 L160.30,54.20 C162.60,48.60 167.00,43.40 172.60,39.40Z" fill="url(#gx)" stroke="#c8261c" stroke-width="0.7"/>
<path d="M177.40,38.00 V56.60" stroke="#a6a6a6" stroke-width="0.9"/>
<path d="M182.60,47.60 H198.80" stroke="#0000ff" stroke-width="1.7"/>
<path d="M206.70,45.40 H222.00" stroke="#1010ff" stroke-width="1.2"/>
<polygon points="210.60,46.00 218.10,46.00 214.35,50.00" fill="#6a6aee"/>
<path d="M232.50,41.60 V50.00 M237.30,41.60 V50.00 M229.00,50.50 H241.00 M231.00,47.80 L232.50,50.00 L234.00,47.80 M235.80,47.80 L237.30,50.00 L238.80,47.80" stroke="#1a1aff" stroke-width="1" fill="none"/>
</svg>
<div class="a" style="left:238.90px;top:0.00px;width:648.00px;height:136.70px;background:#7878d2"></div>
<svg class="a" style="left:244.90px;top:3.30px" width="11.2" height="10.8" viewBox="0 0 11.2 10.8" >
<polygon points="2.7,0.2 5.1,0.2 4.2,4.3 1.8,4.3" fill="#5454e6"/><polygon points="6.2,0.2 11.2,0.2 11.2,4.3 5.3,4.3" fill="#3434d6"/><polygon points="1.55,5.1 4,5.1 3.55,7.1 1.1,7.1" fill="#2424d0"/><polygon points="5.1,5.1 11.2,5.1 11.2,7.1 4.65,7.1" fill="#0a0ac4"/><polygon points="0.75,8 3.3,8 2.7,10.7 0.1,10.7" fill="#1414c8"/><polygon points="4.4,8 11.2,8 11.2,10.7 3.8,10.7" fill="#0000b2"/>
</svg>
<div class="t" style="left:511.40px;top:4px;font-size:9.8px;color:#2a2a50;transform-origin:0 50%;transform:scaleX(0.9867);">Calculation Depth&nbsp; 1.6m</div>
<div class="a" style="left:853.00px;top:0.00px;width:29.00px;height:12.60px;background:#c75050"></div>
<svg class="a" style="left:0.00px;top:0.00px" width="886" height="471" viewBox="0 0 886 471" >
<path d="M865.5,3.8999999999999986 l5,5 M870.5,3.8999999999999986 l-5,5" stroke="#fff" stroke-width="1.5"/>
<rect x="841.6" y="4.600000000000001" width="5.8" height="3.6" fill="none" stroke="#26264a" stroke-width="0.8"/><path d="M841.2,4.399999999999999 h6.6" stroke="#26264a" stroke-width="1.3"/>
<path d="M824.3,8 h5.4" stroke="#26264a" stroke-width="1.5"/>
</svg>
<div class="a" style="left:244.00px;top:18.80px;width:637.40px;height:113.30px;background:#f0f0f0"></div>
<div class="a" style="left:244.00px;top:18.80px;width:637.40px;height:16.50px;background:linear-gradient(to right,#f1f1f1,#f6f6f6 40%,#ffffff)"></div>
<div class="t" style="left:254.00px;top:24px;font-size:8.2px;color:#1a1a1a;transform-origin:0 50%;transform:scaleX(0.9482);">Tension</div>
<div class="t" style="left:293.50px;top:24px;font-size:8.2px;color:#1a1a1a;transform-origin:0 50%;transform:scaleX(0.8776);">Strain</div>
<div class="t" style="left:324.80px;top:24px;font-size:8.2px;color:#1a1a1a;transform-origin:0 50%;transform:scaleX(0.9490);">Settlement</div>
<div class="t" style="left:374.70px;top:24px;font-size:8.2px;color:#1a1a1a;transform-origin:0 50%;transform:scaleX(0.8975);">Force in Pile</div>
<div class="t" style="left:428.30px;top:24px;font-size:8.2px;color:#1a1a1a;transform-origin:0 50%;transform:scaleX(0.9490);">Print</div>
<div class="a" style="left:247.00px;top:40.00px;width:634.40px;height:88.00px;background:#a4a4a4;overflow:hidden;border-top:1px solid #1c1c1c;border-left:1px solid #1c1c1c;border-bottom:1px solid #2a2a2a">
<div class="a" style="left:0.00px;top:0.30px;width:616.90px;height:37.50px;background:#fff"></div>
<div class="a" style="left:0.00px;top:0.00px;width:640.00px;height:0.60px;background:#8a8a8a"></div>
<div class="a" style="left:0.00px;top:37.80px;width:26.60px;height:60.00px;background:#fff"></div>
<div class="a" style="left:26.60px;top:37.80px;width:590.30px;height:60.00px;background:#fff"></div>
<div class="a" style="left:26.90px;top:38.20px;width:25.00px;height:13.90px;background:#3399ff"></div>
<div class="a" style="left:26.20px;top:0.30px;width:0.90px;height:37.50px;background:#e6ecf4"></div>
<div class="a" style="left:51.70px;top:0.30px;width:0.90px;height:37.50px;background:#e6ecf4"></div>
<div class="a" style="left:97.30px;top:0.30px;width:0.90px;height:37.50px;background:#e6ecf4"></div>
<div class="a" style="left:149.00px;top:0.30px;width:0.90px;height:37.50px;background:#e6ecf4"></div>
<div class="a" style="left:201.00px;top:0.30px;width:0.90px;height:37.50px;background:#e6ecf4"></div>
<div class="a" style="left:252.40px;top:0.30px;width:0.90px;height:37.50px;background:#e6ecf4"></div>
<div class="a" style="left:304.50px;top:0.30px;width:0.90px;height:37.50px;background:#e6ecf4"></div>
<div class="a" style="left:356.60px;top:0.30px;width:0.90px;height:37.50px;background:#e6ecf4"></div>
<div class="a" style="left:408.10px;top:0.30px;width:0.90px;height:37.50px;background:#e6ecf4"></div>
<div class="a" style="left:459.90px;top:0.30px;width:0.90px;height:37.50px;background:#e6ecf4"></div>
<div class="a" style="left:512.00px;top:0.30px;width:0.90px;height:37.50px;background:#e6ecf4"></div>
<div class="a" style="left:563.70px;top:0.30px;width:0.90px;height:37.50px;background:#e6ecf4"></div>
<div class="a" style="left:0.00px;top:37.30px;width:616.90px;height:1.00px;background:#d4dce8"></div>
<div class="a" style="left:0.00px;top:51.90px;width:26.60px;height:0.90px;background:#dfe7f1"></div>
<div class="a" style="left:0.00px;top:66.20px;width:26.60px;height:0.90px;background:#dfe7f1"></div>
<div class="a" style="left:0.00px;top:80.20px;width:26.60px;height:0.90px;background:#dfe7f1"></div>
<div class="a" style="left:26.10px;top:37.80px;width:0.90px;height:60.00px;background:#b8c0cc"></div>
<div class="a" style="left:51.60px;top:37.80px;width:1.00px;height:60.00px;background:#a0a0a0"></div>
<div class="a" style="left:97.20px;top:37.80px;width:1.00px;height:60.00px;background:#a0a0a0"></div>
<div class="a" style="left:148.90px;top:37.80px;width:1.00px;height:60.00px;background:#a0a0a0"></div>
<div class="a" style="left:200.90px;top:37.80px;width:1.00px;height:60.00px;background:#a0a0a0"></div>
<div class="a" style="left:252.30px;top:37.80px;width:1.00px;height:60.00px;background:#a0a0a0"></div>
<div class="a" style="left:304.40px;top:37.80px;width:1.00px;height:60.00px;background:#a0a0a0"></div>
<div class="a" style="left:356.50px;top:37.80px;width:1.00px;height:60.00px;background:#a0a0a0"></div>
<div class="a" style="left:408.00px;top:37.80px;width:1.00px;height:60.00px;background:#a0a0a0"></div>
<div class="a" style="left:459.80px;top:37.80px;width:1.00px;height:60.00px;background:#a0a0a0"></div>
<div class="a" style="left:511.90px;top:37.80px;width:1.00px;height:60.00px;background:#a0a0a0"></div>
<div class="a" style="left:563.60px;top:37.80px;width:1.00px;height:60.00px;background:#a0a0a0"></div>
<div class="a" style="left:616.40px;top:37.80px;width:1.00px;height:60.00px;background:#a0a0a0"></div>
<div class="a" style="left:26.60px;top:51.80px;width:590.30px;height:1.00px;background:#a0a0a0"></div>
<div class="a" style="left:26.60px;top:66.10px;width:590.30px;height:1.00px;background:#a0a0a0"></div>
<div class="a" style="left:26.60px;top:80.10px;width:590.30px;height:1.00px;background:#a0a0a0"></div>
<div class="t" style="left:31.10px;top:16px;font-size:7.6px;color:#1c1c1c;transform-origin:0 50%;transform:scaleX(0.9);">Pile #</div>
<div class="t" style="left:56.60px;top:16px;font-size:7.6px;color:#1c1c1c;transform-origin:0 50%;transform:scaleX(0.9);">X (m)</div>
<div class="t" style="left:102.20px;top:12px;font-size:7.6px;color:#1c1c1c;transform-origin:0 50%;transform:scaleX(0.9);">Force on</div>
<div class="t" style="left:102.20px;top:20px;font-size:7.6px;color:#1c1c1c;transform-origin:0 50%;transform:scaleX(0.9);">Pile (kn)</div>
<div class="t" style="left:153.90px;top:4px;font-size:7.6px;color:#1c1c1c;transform-origin:0 50%;transform:scaleX(0.9);">Max.</div>
<div class="t" style="left:153.90px;top:12px;font-size:7.6px;color:#1c1c1c;transform-origin:0 50%;transform:scaleX(0.9);">Press. on</div>
<div class="t" style="left:153.90px;top:20px;font-size:7.6px;color:#1c1c1c;transform-origin:0 50%;transform:scaleX(0.9);">Soil</div>
<div class="t" style="left:153.90px;top:28px;font-size:7.6px;color:#1c1c1c;transform-origin:0 50%;transform:scaleX(0.9);">(kn/m^2)</div>
<div class="t" style="left:205.90px;top:8px;font-size:7.6px;color:#1c1c1c;transform-origin:0 50%;transform:scaleX(0.9);">Settle. on</div>
<div class="t" style="left:205.90px;top:16px;font-size:7.6px;color:#1c1c1c;transform-origin:0 50%;transform:scaleX(0.9);">Pile Top</div>
<div class="t" style="left:205.90px;top:24px;font-size:7.6px;color:#1c1c1c;transform-origin:0 50%;transform:scaleX(0.9);">(m)</div>
<div class="t" style="left:257.30px;top:8px;font-size:7.6px;color:#1c1c1c;transform-origin:0 50%;transform:scaleX(0.9);">Max</div>
<div class="t" style="left:257.30px;top:16px;font-size:7.6px;color:#1c1c1c;transform-origin:0 50%;transform:scaleX(0.9);">Settle. on</div>
<div class="t" style="left:257.30px;top:24px;font-size:7.6px;color:#1c1c1c;transform-origin:0 50%;transform:scaleX(0.9);">Soil (m)</div>
<div class="t" style="left:309.40px;top:12px;font-size:7.6px;color:#1c1c1c;transform-origin:0 50%;transform:scaleX(0.9);">Tension 1</div>
<div class="t" style="left:309.40px;top:20px;font-size:7.6px;color:#1c1c1c;transform-origin:0 50%;transform:scaleX(0.9);">(kn)</div>
<div class="t" style="left:361.50px;top:8px;font-size:7.6px;color:#1c1c1c;transform-origin:0 50%;transform:scaleX(0.9);">Strain in</div>
<div class="t" style="left:361.50px;top:16px;font-size:7.6px;color:#1c1c1c;transform-origin:0 50%;transform:scaleX(0.9);">Reinforcement</div>
<div class="t" style="left:361.50px;top:24px;font-size:7.6px;color:#1c1c1c;transform-origin:0 50%;transform:scaleX(0.9);">(%)</div>
<div class="t" style="left:413.00px;top:12px;font-size:7.6px;color:#1c1c1c;transform-origin:0 50%;transform:scaleX(0.9);">Tension 2</div>
<div class="t" style="left:413.00px;top:20px;font-size:7.6px;color:#1c1c1c;transform-origin:0 50%;transform:scaleX(0.9);">(kn)</div>
<div class="t" style="left:464.80px;top:12px;font-size:7.6px;color:#1c1c1c;transform-origin:0 50%;transform:scaleX(0.9);">Tension</div>
<div class="t" style="left:464.80px;top:20px;font-size:7.6px;color:#1c1c1c;transform-origin:0 50%;transform:scaleX(0.9);">1+2 (kn)</div>
<div class="t" style="left:516.90px;top:16px;font-size:7.6px;color:#1c1c1c;transform-origin:0 50%;transform:scaleX(0.9);">FS of Pile</div>
<div class="t" style="left:568.60px;top:12px;font-size:7.6px;color:#1c1c1c;transform-origin:0 50%;transform:scaleX(0.9);">FS of</div>
<div class="t" style="left:568.60px;top:20px;font-size:7.6px;color:#1c1c1c;transform-origin:0 50%;transform:scaleX(0.9);">Reinforcement</div>
<div class="t" style="left:37.45px;top:42px;font-size:7.6px;color:#fff;transform-origin:0 50%;transform:scaleX(0.9);">1</div>
<div class="t" style="left:66.34px;top:42px;font-size:7.6px;color:#1a1a1a;transform-origin:0 50%;transform:scaleX(0.9);">24.60</div>
<div class="t" style="left:114.99px;top:42px;font-size:7.6px;color:#1a1a1a;transform-origin:0 50%;transform:scaleX(0.9);">36.27</div>
<div class="t" style="left:168.74px;top:42px;font-size:7.6px;color:#1a1a1a;transform-origin:0 50%;transform:scaleX(0.9);">7.81</div>
<div class="t" style="left:203.60px;top:42px;font-size:7.6px;color:#1a1a1a;transform-origin:0 50%;transform:scaleX(0.9);">3.66E-03</div>
<div class="t" style="left:265.22px;top:42px;font-size:7.6px;color:#1a1a1a;transform-origin:0 50%;transform:scaleX(0.9);">4.11E-02</div>
<div class="t" style="left:324.29px;top:42px;font-size:7.6px;color:#1a1a1a;transform-origin:0 50%;transform:scaleX(0.9);">7.95</div>
<div class="t" style="left:378.00px;top:42px;font-size:7.6px;color:#1a1a1a;transform-origin:0 50%;transform:scaleX(0.9);">.80</div>
<div class="t" style="left:427.74px;top:42px;font-size:7.6px;color:#1a1a1a;transform-origin:0 50%;transform:scaleX(0.9);">4.69</div>
<div class="t" style="left:477.79px;top:42px;font-size:7.6px;color:#1a1a1a;transform-origin:0 50%;transform:scaleX(0.9);">12.64</div>
<div class="t" style="left:529.69px;top:42px;font-size:7.6px;color:#1a1a1a;transform-origin:0 50%;transform:scaleX(0.9);">18.23</div>
<div class="t" style="left:581.94px;top:42px;font-size:7.6px;color:#1a1a1a;transform-origin:0 50%;transform:scaleX(0.9);">34.81</div>
<div class="t" style="left:37.45px;top:56px;font-size:7.6px;color:#1a1a1a;transform-origin:0 50%;transform:scaleX(0.9);">2</div>
<div class="t" style="left:66.34px;top:56px;font-size:7.6px;color:#1a1a1a;transform-origin:0 50%;transform:scaleX(0.9);">26.20</div>
<div class="t" style="left:114.99px;top:56px;font-size:7.6px;color:#1a1a1a;transform-origin:0 50%;transform:scaleX(0.9);">84.59</div>
<div class="t" style="left:168.74px;top:56px;font-size:7.6px;color:#1a1a1a;transform-origin:0 50%;transform:scaleX(0.9);">9.59</div>
<div class="t" style="left:203.60px;top:56px;font-size:7.6px;color:#1a1a1a;transform-origin:0 50%;transform:scaleX(0.9);">8.53E-03</div>
<div class="t" style="left:264.97px;top:56px;font-size:7.6px;color:#1a1a1a;transform-origin:0 50%;transform:scaleX(0.9);">6.08E-02</div>
<div class="t" style="left:324.29px;top:56px;font-size:7.6px;color:#1a1a1a;transform-origin:0 50%;transform:scaleX(0.9);">9.90</div>
<div class="t" style="left:378.00px;top:56px;font-size:7.6px;color:#1a1a1a;transform-origin:0 50%;transform:scaleX(0.9);">.99</div>
<div class="t" style="left:425.84px;top:56px;font-size:7.6px;color:#1a1a1a;transform-origin:0 50%;transform:scaleX(0.9);">18.75</div>
<div class="t" style="left:477.79px;top:56px;font-size:7.6px;color:#1a1a1a;transform-origin:0 50%;transform:scaleX(0.9);">28.65</div>
<div class="t" style="left:531.59px;top:56px;font-size:7.6px;color:#1a1a1a;transform-origin:0 50%;transform:scaleX(0.9);">7.82</div>
<div class="t" style="left:581.94px;top:56px;font-size:7.6px;color:#1a1a1a;transform-origin:0 50%;transform:scaleX(0.9);">15.36</div>
<div class="t" style="left:37.45px;top:71px;font-size:7.6px;color:#1a1a1a;transform-origin:0 50%;transform:scaleX(0.9);">3</div>
<div class="t" style="left:66.34px;top:71px;font-size:7.6px;color:#1a1a1a;transform-origin:0 50%;transform:scaleX(0.9);">27.80</div>
<div class="t" style="left:113.09px;top:71px;font-size:7.6px;color:#1a1a1a;transform-origin:0 50%;transform:scaleX(0.9);">132.33</div>
<div class="t" style="left:167.10px;top:71px;font-size:7.6px;color:#1a1a1a;transform-origin:0 50%;transform:scaleX(0.9);">11.66</div>
<div class="t" style="left:203.60px;top:71px;font-size:7.6px;color:#1a1a1a;transform-origin:0 50%;transform:scaleX(0.9);">1.33E-02</div>
<div class="t" style="left:264.97px;top:71px;font-size:7.6px;color:#1a1a1a;transform-origin:0 50%;transform:scaleX(0.9);">7.12E-02</div>
<div class="t" style="left:322.39px;top:71px;font-size:7.6px;color:#1a1a1a;transform-origin:0 50%;transform:scaleX(0.9);">12.20</div>
<div class="t" style="left:376.09px;top:71px;font-size:7.6px;color:#1a1a1a;transform-origin:0 50%;transform:scaleX(0.9);">1.22</div>
<div class="t" style="left:425.84px;top:71px;font-size:7.6px;color:#1a1a1a;transform-origin:0 50%;transform:scaleX(0.9);">42.18</div>
<div class="t" style="left:477.79px;top:71px;font-size:7.6px;color:#1a1a1a;transform-origin:0 50%;transform:scaleX(0.9);">54.38</div>
<div class="t" style="left:531.59px;top:71px;font-size:7.6px;color:#1a1a1a;transform-origin:0 50%;transform:scaleX(0.9);">5.00</div>
<div class="t" style="left:583.84px;top:71px;font-size:7.6px;color:#1a1a1a;transform-origin:0 50%;transform:scaleX(0.9);">8.09</div>
<div class="t" style="left:37.45px;top:84px;font-size:7.6px;color:#1a1a1a;transform-origin:0 50%;transform:scaleX(0.9);">4</div>
<div class="t" style="left:66.34px;top:84px;font-size:7.6px;color:#1a1a1a;transform-origin:0 50%;transform:scaleX(0.9);">29.40</div>
<div class="t" style="left:113.09px;top:84px;font-size:7.6px;color:#1a1a1a;transform-origin:0 50%;transform:scaleX(0.9);">180.08</div>
<div class="t" style="left:166.84px;top:84px;font-size:7.6px;color:#1a1a1a;transform-origin:0 50%;transform:scaleX(0.9);">13.73</div>
<div class="t" style="left:203.60px;top:84px;font-size:7.6px;color:#1a1a1a;transform-origin:0 50%;transform:scaleX(0.9);">1.80E-02</div>
<div class="t" style="left:264.97px;top:84px;font-size:7.6px;color:#1a1a1a;transform-origin:0 50%;transform:scaleX(0.9);">8.17E-02</div>
<div class="t" style="left:322.39px;top:84px;font-size:7.6px;color:#1a1a1a;transform-origin:0 50%;transform:scaleX(0.9);">14.50</div>
<div class="t" style="left:376.09px;top:84px;font-size:7.6px;color:#1a1a1a;transform-origin:0 50%;transform:scaleX(0.9);">1.45</div>
<div class="t" style="left:425.84px;top:84px;font-size:7.6px;color:#1a1a1a;transform-origin:0 50%;transform:scaleX(0.9);">71.00</div>
<div class="t" style="left:477.79px;top:84px;font-size:7.6px;color:#1a1a1a;transform-origin:0 50%;transform:scaleX(0.9);">85.51</div>
<div class="t" style="left:531.59px;top:84px;font-size:7.6px;color:#1a1a1a;transform-origin:0 50%;transform:scaleX(0.9);">3.67</div>
<div class="t" style="left:583.84px;top:84px;font-size:7.6px;color:#1a1a1a;transform-origin:0 50%;transform:scaleX(0.9);">4.93</div>
<svg class="a" style="left:4.80px;top:42.90px" width="3" height="5.4" viewBox="0 0 3 5.4"><polygon points="0,0 3,2.7 0,5.4" fill="#111"/></svg>
<div class="a" style="left:616.90px;top:0.30px;width:9.00px;height:100.00px;background:#a4a4a4"></div>
<div class="a" style="left:625.80px;top:0.30px;width:8.00px;height:100.00px;background:#f0f0f0"></div>
<div class="a" style="left:627.20px;top:11.60px;width:8.00px;height:9.50px;background:#cdcdcd"></div>
<svg class="a" style="left:628.70px;top:3.30px" width="5.4" height="3.4" viewBox="0 0 5.4 3.4"><path d="M0.4,3 L2.7,0.6 L5,3" stroke="#3a3a3a" stroke-width="1.15" fill="none"/></svg>
<svg class="a" style="left:628.70px;top:79.30px" width="5.4" height="3.4" viewBox="0 0 5.4 3.4"><path d="M0.4,0.4 L2.7,2.8 L5,0.4" stroke="#3a3a3a" stroke-width="1.15" fill="none"/></svg>
</div>
<svg class="a" style="left:0.00px;top:0.00px" width="886" height="471" viewBox="0 0 886 471" >
<path d="M875.60,128.80 v2.6 M877.60,128.80 v2.6 M879.60,128.80 v2.6" stroke="#b4b4b4" stroke-width="0.8" stroke-dasharray="0.9,0.8"/>
</svg>
</div>
<div class="a" style="left:13px;top:14px;width:886px;height:471px;box-shadow:inset 0 0 8px 1.5px rgba(25,25,30,.66),inset 0 0 1.5px 0.5px rgba(80,60,0,.5);pointer-events:none"></div>
</div></body></html>
